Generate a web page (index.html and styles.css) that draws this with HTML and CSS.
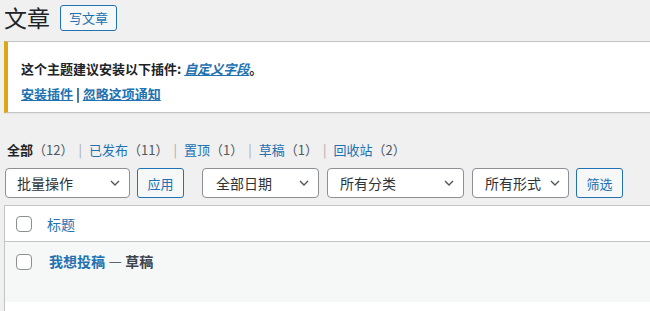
FILE: index.html
```html
<!DOCTYPE html>
<html lang="zh-CN">
<head>
<meta charset="utf-8">
<title>文章</title>
<link rel="stylesheet" href="styles.css">
</head>
<body>
<div class="wrap">
  <div class="heading">
    <h1 class="page-title">文章</h1>
    <a class="title-action">写文章</a>
  </div>

  <div class="notice">
    <p class="notice-line"><strong>这个主题建议安装以下插件: <a class="plugin-link"><em>自定义字段</em></a>。</strong></p>
    <p class="notice-line notice-actions"><strong><a class="n-link">安装插件</a> | <a class="n-link">忽略这项通知</a></strong></p>
  </div>

  <ul class="subsubsub">
    <li class="current">全部<span class="count">（12）</span></li>
    <li class="sep">|</li>
    <li><a>已发布</a><span class="count">（11）</span></li>
    <li class="sep">|</li>
    <li><a>置顶</a><span class="count">（1）</span></li>
    <li class="sep">|</li>
    <li><a>草稿</a><span class="count">（1）</span></li>
    <li class="sep">|</li>
    <li><a>回收站</a><span class="count">（2）</span></li>
  </ul>

  <div class="tablenav">
    <div class="select s-bulk"><span>批量操作</span><svg class="chev" width="10" height="6" viewBox="0 0 10 6"><polyline points="1,1 5,5 9,1" fill="none" stroke="#50575e" stroke-width="1.4"/></svg></div>
    <div class="btn">应用</div>
    <div class="select s-date"><span>全部日期</span><svg class="chev" width="10" height="6" viewBox="0 0 10 6"><polyline points="1,1 5,5 9,1" fill="none" stroke="#50575e" stroke-width="1.4"/></svg></div>
    <div class="select s-cat"><span>所有分类</span><svg class="chev" width="10" height="6" viewBox="0 0 10 6"><polyline points="1,1 5,5 9,1" fill="none" stroke="#50575e" stroke-width="1.4"/></svg></div>
    <div class="select s-format"><span>所有形式</span><svg class="chev" width="10" height="6" viewBox="0 0 10 6"><polyline points="1,1 5,5 9,1" fill="none" stroke="#50575e" stroke-width="1.4"/></svg></div>
    <div class="btn">筛选</div>
  </div>

  <div class="table">
    <div class="thead">
      <span class="cb"></span>
      <a class="col-title">标题</a>
    </div>
    <div class="row alt">
      <span class="cb"></span>
      <span class="row-title"><a>我想投稿</a> — 草稿</span>
    </div>
    <div class="row"></div>
  </div>
</div>
</body>
</html>
```

FILE: styles.css
```css
html, body {
  margin: 0;
  padding: 0;
  background: #f0f0f1;
  overflow: hidden;
}
body {
  font-family: "Noto Sans CJK SC", "Liberation Sans", sans-serif;
  font-size: 13px;
  color: #3c434a;
}
a { color: #2271b1; text-decoration: none; }

.wrap {
  width: 740px;
  padding-left: 4px;
}

.heading {
  display: flex;
  align-items: center;
  gap: 10px;
  padding-top: 4px;
  height: 27px;
}
.page-title {
  margin: 0;
  font-size: 23px;
  font-weight: 400;
  line-height: 27px;
  color: #1d2327;
}
.title-action {
  box-sizing: border-box;
  height: 26px;
  display: flex;
  align-items: center;
  padding: 0 8px;
  border: 1px solid #2271b1;
  border-radius: 3px;
  background: #f6f7f7;
  color: #2271b1;
  font-size: 13px;
  line-height: 1;
}

.notice {
  margin-top: 10px;
  background: #fff;
  border: 1px solid #c3c4c7;
  border-left: 4px solid #dba617;
  padding: 17px 13px 8px;
  box-shadow: 0 1px 1px rgba(0,0,0,0.04);
}
.notice-line {
  margin: 0;
  line-height: 20px;
  color: #1d2327;
}
.notice-actions { margin-top: 5px; }
.plugin-link, .n-link { text-decoration: underline; }

.subsubsub {
  list-style: none;
  margin: 27px 0 0;
  padding: 0 0 0 3px;
  display: flex;
  line-height: 20px;
  height: 20px;
  color: #646970;
}
.subsubsub li { white-space: nowrap; }
.subsubsub .current { color: #1d2327; font-weight: 600; }
.subsubsub .count { color: #50575e; font-weight: 400; }
.subsubsub .sep { color: #a7aaad; padding: 0 7px 0 5px; }

.tablenav {
  margin-top: 8px;
  display: flex;
  height: 30px;
  padding-left: 1px;
}
.select {
  box-sizing: border-box;
  height: 30px;
  border: 1px solid #8c8f94;
  border-radius: 4px;
  background: #fff;
  color: #2c3338;
  font-size: 14px;
  display: flex;
  align-items: center;
  justify-content: space-between;
  padding: 0 9px 0 11px;
}
.chev { flex: none; }
.s-bulk { width: 125px; margin-right: 7px; }
.s-date { width: 117px; margin-right: 8px; padding-left: 13px; }
.s-cat { width: 137px; margin-right: 8px; padding-left: 12px; }
.s-format { width: 97px; margin-right: 7px; padding-left: 12px; padding-right: 8px; }
.btn {
  box-sizing: border-box;
  height: 30px;
  width: 47px;
  border: 1px solid #2271b1;
  border-radius: 3px;
  background: #f6f7f7;
  color: #2271b1;
  font-size: 13px;
  display: flex;
  align-items: center;
  justify-content: center;
}
.tablenav .btn:nth-child(2) { margin-right: 18px; }

.table {
  margin-top: 7px;
  border: 1px solid #c3c4c7;
  border-right: 0;
  background: #fff;
  box-shadow: 0 1px 1px rgba(0,0,0,0.04);
}
.thead {
  height: 35px;
  border-bottom: 1px solid #c3c4c7;
  display: flex;
  align-items: center;
  padding-left: 11px;
  background: #fff;
}
.cb {
  box-sizing: border-box;
  width: 16px;
  height: 16px;
  border: 1px solid #8c8f94;
  border-radius: 4px;
  background: #fff;
  flex: none;
}
.col-title {
  margin-left: 15px;
  font-size: 14px;
  line-height: 20px;
}
.row {
  height: 60px;
  background: #fff;
  display: flex;
  align-items: flex-start;
  padding-left: 11px;
}
.row.alt { background: #f6f7f7; }
.row .cb { margin-top: 12px; }
.row-title {
  margin-left: 17px;
  margin-top: 9px;
  font-size: 14px;
  line-height: 20px;
  font-weight: 600;
  color: #3c434a;
}
```
